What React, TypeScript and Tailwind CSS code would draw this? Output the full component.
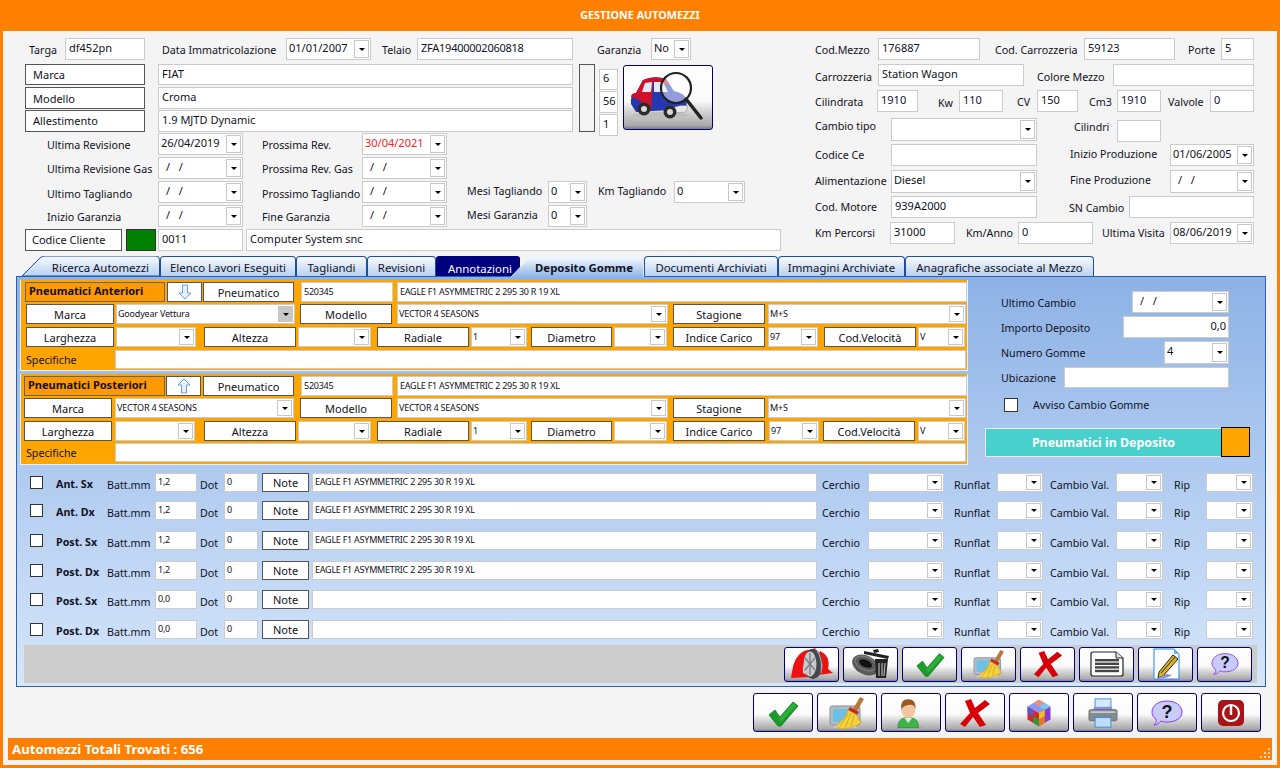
import type { ReactNode } from 'react'

type P = { className?: string; value?: string; tiny?: boolean; red?: boolean }

function Label({ className = '', children, bold }: { className?: string; children: ReactNode; bold?: boolean }) {
  return (
    <span className={'shrink-0 whitespace-nowrap text-[10.7px] text-[#111122] ' + (bold ? 'font-bold ' : '') + className}>
      {children}
    </span>
  )
}

function Input({ className = '', value = '', tiny, red, low }: P & { low?: boolean }) {
  return (
    <input
      readOnly
      value={value}
      className={
        'shrink-0 h-full min-w-0 bg-white border border-[#CBCBCB] outline-none ' +
        (low ? 'pb-[1px] ' : 'pb-[3px] ') +
        (tiny ? 'pl-[2px] text-[9px] tracking-[-0.25px] ' : 'pl-[3px] text-[11px] ') +
        (red ? 'text-[#ff2020] ' : 'text-[#111122] ') +
        className
      }
    />
  )
}

function Combo({ className = '', value = '', tiny, red, disabled }: P & { disabled?: boolean }) {
  const blank = value === ' / /'
  return (
    <div className={'shrink-0 h-full flex bg-white border border-[#CBCBCB] ' + className}>
      <span
        className={
          'flex-1 overflow-hidden whitespace-pre leading-[18px] ' +
          (blank ? 'pl-[7px] ' : tiny ? 'pl-[1px] ' : 'pl-[2px] ') +
          (tiny ? 'text-[9px] tracking-[-0.2px] ' : 'text-[11px] ') +
          (red ? 'text-[#ff2020]' : 'text-[#111122]')
        }
      >
        {blank ? '/   /' : value}
      </span>
      <span
        className={
          'w-[15px] my-[1px] mr-[1px] border flex items-center justify-center ' +
          (disabled ? 'bg-[#C8C8C8] border-[#C8C8C8]' : 'bg-white border-[#C8C8C8]')
        }
      >
        <span className="w-0 h-0 border-x-[3px] border-x-transparent border-t-[3px] border-t-black" />
      </span>
    </div>
  )
}

function Btn({ className = '', children }: { className?: string; children: ReactNode }) {
  return (
    <button className={'shrink-0 h-full flex items-center justify-center bg-white border border-[#555555] text-[11px] text-[#111122] ' + (className.includes('pt-') ? '' : 'pt-[2px] ') + className}>
      {children}
    </button>
  )
}

function ImgBtn({ className = '', children }: { className?: string; children: ReactNode }) {
  return (
    <button
      className={
        'shrink-0 flex items-center justify-center rounded-[3px] border border-[#00007F] bg-[linear-gradient(to_bottom,#ffffff_0%,#fafafa_55%,#d4d4d4_72%,#aaaaaa_94%,#808080_100%)] ' +
        className
      }
    >
      {children}
    </button>
  )
}

function CheckIcon({ s = 32 }: { s?: number }) {
  return (
    <svg width={s} height={s} viewBox="0 0 32 32">
      <path d="M2 18 L8 13 L13 20 L26 5 L31 9 L14 29 L11 29 Z" fill="#1c9a2a" stroke="#0d7a1b" strokeWidth="0.8" />
      <path d="M8 14 L13 21 L26 6 L29 9 L14 25 Z" fill="#2cae38" />
    </svg>
  )
}

function XIcon({ s = 32 }: { s?: number }) {
  return (
    <svg width={s} height={s} viewBox="0 0 32 32">
      <path d="M6 4 L12 2 L16 11 L26 3 L31 7 L19 16 L27 28 L21 30 L14 20 L6 30 L1 27 L11 16 Z" fill="#d80008" />
    </svg>
  )
}

function BroomIcon({ s = 34 }: { s?: number }) {
  return (
    <svg width={s + 6} height={s} viewBox="0 0 40 34">
      <rect x="3" y="10" width="30" height="19" rx="2" fill="#b6bcc2" stroke="#8b9096" />
      <rect x="6" y="13" width="24" height="13" fill="#6cc0ea" />
      <path d="M8 29 L28 29 L30 32 L6 32 Z" fill="#c4c8cc" />
      <path d="M33 1 L37 3 L30 15 L26 13 Z" fill="#b47a3a" />
      <path d="M23 11 L32 16 L30 19 L21 14 Z" fill="#d0242a" />
      <path d="M21 14 L30 19 Q31 25 35 26 Q27 32 15 33 Q10 32 9 29 Q18 24 21 14 Z" fill="#f3d23c" stroke="#c9a020" strokeWidth="0.6" />
      <path d="M24 17 L18 32 M21 18 L13 30 M27 19 L24 30" stroke="#c9a020" strokeWidth="0.8" />
    </svg>
  )
}

function HelpIcon({ s = 30 }: { s?: number }) {
  return (
    <svg width={s + 2} height={s} viewBox="0 0 32 30">
      <path d="M16 3 C25 3 31 8 31 14 C31 20 25 24 16 24 C14 24 12 24 10 23 C8 25 6 27 3 27 C5 25 6 23 5 21 C2 19 1 17 1 14 C1 8 7 3 16 3 Z" fill="#c9ccfa" stroke="#8a3cf0" strokeWidth="1" />
      <text x="16" y="20" textAnchor="middle" fontSize="18" fontWeight="700" fill="#111111" fontFamily="Liberation Sans">?</text>
    </svg>
  )
}

function TireSwapIcon() {
  return (
    <svg width="44" height="32" viewBox="0 0 44 32">
      <path d="M2 24 Q4 8 14 3 L26 0 L20 9 Q12 13 13 25 L20 29 L1 30 Z" fill="#ee1111" />
      <path d="M30 3 Q41 8 38 21 L43 25 L28 27 L32 21 Q34 12 28 8 Z" fill="#ee1111" />
      <ellipse cx="23" cy="16" rx="9.5" ry="15" fill="#45484c" />
      <ellipse cx="20" cy="16" rx="6.5" ry="12.5" fill="#c7c9cc" />
      <path d="M20 5 L20 27 M15 10 L25 22 M25 10 L15 22" stroke="#7d8084" strokeWidth="1.4" />
      <path d="M27 3 Q33 10 31 25" stroke="#bbbbbb" strokeWidth="1" fill="none" />
    </svg>
  )
}

function TireTrashIcon() {
  return (
    <svg width="40" height="32" viewBox="0 0 40 32">
      <ellipse cx="14.500" cy="17" rx="14" ry="9.500" transform="rotate(25 14.500 17)" fill="#5a5a5a" />
      <ellipse cx="14.500" cy="15.500" rx="11" ry="6.500" transform="rotate(25 14.500 15.500)" fill="none" stroke="#8c8c8c" strokeWidth="0.8" />
      <ellipse cx="14.500" cy="15.500" rx="7" ry="3.500" transform="rotate(25 14.500 15.500)" fill="#111111" />
      <path d="M22 2 L27 1 L28 4 L23 5 Z" fill="#222222" />
      <path d="M13 3 L38 8 L37 11 L13 6 Z" fill="#222222" />
      <path d="M24 11 L37 11 L35 30 L25 30 Z" fill="#222222" />
      <path d="M28 15 L28 28 M31 15 L31 28 M34 15 L33 28" stroke="#aaaaaa" strokeWidth="1.3" />
    </svg>
  )
}

function DocIcon() {
  return (
    <svg width="34" height="26" viewBox="0 0 34 26">
      <path d="M3 1 L26 1 L33 7 L33 23 Q33 25 31 25 L3 25 Q1 25 1 23 L1 3 Q1 1 3 1 Z" fill="#ffffff" stroke="#222" strokeWidth="1.2" />
      <path d="M26 1 L26 7 L33 7" fill="#e4e4e4" stroke="#222" strokeWidth="1" />
      <rect x="5" y="8" width="24" height="2.4" fill="#444" />
      <rect x="5" y="11.600" width="24" height="2.4" fill="#444" />
      <rect x="5" y="15.200" width="24" height="2.4" fill="#444" />
      <rect x="5" y="18.800" width="24" height="2.4" fill="#444" />
    </svg>
  )
}

function NoteIcon() {
  return (
    <svg width="28" height="32" viewBox="0 0 28 32">
      <path d="M2 1 L22 1 L27 6 L27 31 L2 31 Z" fill="#ffffff" stroke="#1e88e5" strokeWidth="1" />
      <path d="M22 1 L22 6 L27 6" fill="#6fb4ee" />
      <path d="M21 7 L26 11 L11 28 L6 30 L7 24 Z" fill="#e0b428" stroke="#222" strokeWidth="1" />
      <path d="M23 9 L9 25" stroke="#222" strokeWidth="1" />
      <path d="M6 30 L14 26 L20 27 Q14 31 6 30 Z" fill="#8f8fd8" />
    </svg>
  )
}

function PersonIcon() {
  return (
    <svg width="38" height="36" viewBox="0 0 34 33">
      <ellipse cx="18" cy="30" rx="12" ry="2" fill="#aaaaaa" />
      <path d="M5 30 Q5 22 11 21 L18 21 Q24 22 24 30 Z" fill="#3fb24a" stroke="#23892c" strokeWidth="0.6" />
      <path d="M11 21 L14.500 26 L18 21 Z" fill="#d8f0d8" />
      <ellipse cx="14.500" cy="13" rx="6.500" ry="8" fill="#f2c6a0" />
      <path d="M8 13 Q7 4 14.500 4 Q22 4 21 13 Q20 9 17 9 Q11 9 8 13 Z" fill="#9a5a22" />
    </svg>
  )
}

function CubeIcon() {
  return (
    <svg width="28" height="30" viewBox="0 0 34 34">
      <path d="M17 1 L31 9 L17 17 L3 9 Z" fill="#8f96f2" />
      <path d="M17 1 L24 5 L17 9 L10 5 Z" fill="#e8907c" />
      <path d="M24 5 L31 9 L24 13 L17 9 Z" fill="#7fc3f0" />
      <path d="M3 9 L17 17 L17 33 L3 25 Z" fill="#d02a2a" />
      <path d="M3 9 L10 13 L10 21 L3 17 Z" fill="#5a5ad8" />
      <path d="M10 21 L17 25 L17 33 L10 29 Z" fill="#2c9a3c" />
      <path d="M31 9 L17 17 L17 33 L31 25 Z" fill="#8a3cd0" />
      <path d="M17 17 L24 13 L24 21 L17 25 Z" fill="#f0c020" />
      <path d="M17 25 L24 21 L24 29 L17 33 Z" fill="#e87820" />
    </svg>
  )
}

function PrinterIcon() {
  return (
    <svg width="30" height="30" viewBox="0 0 34 34">
      <rect x="8" y="1" width="18" height="14" fill="#d4ebff" stroke="#2a8ae0" />
      <path d="M7 10 L27 10 L28 15 L6 15 Z" fill="#8e8ee6" />
      <rect x="1" y="13" width="32" height="13" rx="2" fill="#848a90" stroke="#5c6268" strokeWidth="0.7" />
      <rect x="3" y="15" width="28" height="2" fill="#c8ccd0" />
      <circle cx="29" cy="18" r="1" fill="#34b050" />
      <rect x="8" y="22" width="18" height="11" fill="#bcdcfa" stroke="#2a8ae0" />
    </svg>
  )
}

function PowerIcon() {
  return (
    <svg width="28" height="28" viewBox="0 0 28 28">
      <rect x="1" y="1" width="26" height="26" rx="5" fill="#a81418" />
      <circle cx="14" cy="14" r="8" fill="none" stroke="#ffffff" strokeWidth="2.2" />
      <rect x="12.800" y="7" width="2.4" height="9" fill="#ffffff" />
    </svg>
  )
}

function CarIcon() {
  return (
    <svg width="88" height="63" viewBox="0 0 88 63">
      <ellipse cx="36" cy="49" rx="28" ry="3" fill="#bdbdbd" />
      <path d="M7 38 Q6 29 12 27 L19 14 Q30 9 42 13 L50 25 Q61 27 63 35 L62 43 L12 46 Z" fill="#2538b0" />
      <path d="M7 31 Q7 27 12 27 L19 14 Q30 9 42 13 L46 19 L29 15 L27 44 L22 44 Q18 32 7 31 Z" fill="#d01028" />
      <path d="M21 17 L28 16 L27 26 L18 26 Z" fill="#dfe8f4" />
      <path d="M30 16 L39 16 L44 26 L30 26 Z" fill="#dfe8f4" />
      <path d="M46 43 Q56 38 64 40 L62 46 L48 47 Z" fill="#e8e8e8" stroke="#888" strokeWidth="0.5" />
      <circle cx="20" cy="43" r="6.500" fill="#2a2a2a" />
      <circle cx="20" cy="43" r="3" fill="#d8d8d8" />
      <circle cx="46" cy="46" r="6.500" fill="#2a2a2a" />
      <circle cx="46" cy="46" r="3" fill="#d8d8d8" />
      <circle cx="52" cy="22" r="15" fill="#ffffff" fillOpacity="0.5" stroke="#222222" strokeWidth="2.2" />
      <path d="M62 33 L77 52" stroke="#222222" strokeWidth="3.4" strokeLinecap="round" />
    </svg>
  )
}

function ArrowIcon({ up }: { up?: boolean }) {
  return (
    <svg width="14" height="16" viewBox="0 0 14 16" className={up ? '' : 'rotate-180'}>
      <path d="M7 1 L13 7 L9.5 7 L9.5 15 L4.5 15 L4.5 7 L1 7 Z" fill="#e6f0fb" stroke="#6f9fd8" strokeWidth="1" />
    </svg>
  )
}

function TireGroup({ rear }: { rear?: boolean }) {
  return (
    <div className={'flex flex-col bg-[#FFA500] border-x border-b border-[#EAF1FB] h-[91px] ' + (rear ? 'mt-[3px] pt-[2px]' : 'pt-[2px]')}>
      <div className="flex h-[20px]">
        <div className={'shrink-0 h-full bg-[#FF9900] border border-[#666666] pl-[3px] text-[11px] font-bold text-[#111122] leading-[16px] ' + (rear ? 'ml-[3px] w-[141px]' : 'ml-[4px] w-[140px]')}>
          {rear ? 'Pneumatici Posteriori' : 'Pneumatici Anteriori'}
        </div>
        <Btn className={rear ? 'ml-[1px] w-[35px] !pt-0' : 'ml-[2px] w-[35px] !pt-0'}><ArrowIcon up={rear} /></Btn>
        <Btn className={rear ? 'ml-[2px] w-[91px]' : 'ml-[1px] w-[91px]'}>Pneumatico</Btn>
        <Input tiny low className="ml-[7px] w-[92px]" value="520345" />
        <Input tiny low className="ml-[4px] w-[570px]" value="EAGLE F1 ASYMMETRIC 2 295 30 R 19 XL" />
      </div>
      <div className="flex h-[20px] mt-[2px]">
        <Btn className={rear ? 'ml-[3px] w-[88px]' : 'ml-[5px] w-[88px]'}>Marca</Btn>
        <Combo tiny disabled={!rear} className={rear ? 'ml-[3px] w-[179px]' : 'ml-[2px] w-[179px]'} value={rear ? 'VECTOR 4 SEASONS' : 'Goodyear Vettura'} />
        <Btn className={rear ? 'ml-[6px] w-[92px]' : 'ml-[5px] w-[92px]'}>Modello</Btn>
        <Combo tiny className="ml-[5px] w-[271px]" value="VECTOR 4 SEASONS" />
        <Btn className="ml-[5px] w-[92px]">Stagione</Btn>
        <Combo tiny className="ml-[3px] w-[198px]" value="M+S" />
      </div>
      <div className="flex h-[20px] mt-[3px]">
        <Btn className={rear ? 'ml-[3px] w-[88px]' : 'ml-[5px] w-[88px]'}>Larghezza</Btn>
        <Combo className={rear ? 'ml-[3px] w-[80px]' : 'ml-[2px] w-[80px]'} />
        <Btn className={rear ? 'ml-[9px] w-[92px]' : 'ml-[8px] w-[92px]'}>Altezza</Btn>
        <Combo className="ml-[2px] w-[73px]" />
        <Btn className="ml-[6px] w-[92px]">Radiale</Btn>
        <Combo tiny className="ml-[2px] w-[56px]" value="1" />
        <Btn className="ml-[4px] w-[81px]">Diametro</Btn>
        <Combo className="ml-[2px] w-[53px]" />
        <Btn className="ml-[6px] w-[92px]">Indice Carico</Btn>
        <Combo tiny className={rear ? 'ml-[4px] w-[50px]' : 'ml-[3px] w-[50px]'} value="97" />
        <Btn className={rear ? 'ml-[4px] w-[92px]' : 'ml-[6px] w-[92px]'}>Cod.Velocità</Btn>
        <Combo tiny className={rear ? 'ml-[3px] w-[47px]' : 'ml-[2px] w-[47px]'} value="V" />
      </div>
      <div className={'flex h-[19px] items-center ' + (rear ? 'mt-[2px]' : 'mt-[3px]')}>
        <Label className="ml-[5px] w-[89px] pt-[2px]">Specifiche</Label>
        <Input className="w-[851px]" />
      </div>
    </div>
  )
}

function TireRow({ className = '', name, batt, note }: { className?: string; name: string; batt: string; note?: boolean }) {
  return (
    <div className={'flex h-[19px] pl-[13px] ' + className}>
      <span className="shrink-0 w-[13px] h-[13px] mt-[3px] bg-white border border-[#333333]" />
      <Label bold className="ml-[13px] w-[51px] pt-[3px]">{name}</Label>
      <Label className="w-[48px] pt-[4px]">Batt.mm</Label>
      <Input tiny className="w-[42px]" value={batt} />
      <Label className="ml-[3px] w-[24px] pt-[4px]">Dot</Label>
      <Input tiny className="w-[34px]" value="0" />
      <Btn className="ml-[4px] w-[47px]">Note</Btn>
      <Input tiny className="ml-[3px] w-[505px]" value={note ? 'EAGLE F1 ASYMMETRIC 2 295 30 R 19 XL' : ''} />
      <Label className="ml-[5px] w-[46px] pt-[4px]">Cerchio</Label>
      <Combo className="w-[76px]" />
      <Label className="ml-[10px] w-[43px] pt-[4px]">Runflat</Label>
      <Combo className="w-[46px]" />
      <Label className="ml-[7px] w-[66px] pt-[4px]">Cambio Val.</Label>
      <Combo className="w-[47px]" />
      <Label className="ml-[11px] w-[32px] pt-[4px]">Rip</Label>
      <Combo className="w-[47px]" />
    </div>
  )
}

function Tab({ className = '', children }: { className?: string; children: ReactNode }) {
  return (
    <div className={'shrink-0 h-full flex items-center justify-center pt-[3px] rounded-t-[4px] border border-b-0 border-[#1E4F9E] bg-[linear-gradient(to_bottom,#F7FAFE,#B9D1F1)] text-[11.4px] text-[#111122] ' + className}>
      {children}
    </div>
  )
}

function Tabs() {
  return (
    <div className="flex h-[20px] mt-[5px] ml-[19px]">
      <div className="relative shrink-0 w-[138px] h-full flex items-center justify-end pr-[11px] pt-[3px] text-[11.4px] text-[#111122]">
        <svg className="absolute inset-0" width="138" height="20" viewBox="0 0 138 20">
          <defs>
            <linearGradient id="tabA" x1="0" y1="0" x2="0" y2="1">
              <stop offset="0" stopColor="#F7FAFE" />
              <stop offset="1" stopColor="#B9D1F1" />
            </linearGradient>
          </defs>
          <path d="M0 20 L18 2 Q20 0 23 0 L134 0 Q137.500 0 137.500 4 L137.500 20 Z" fill="url(#tabA)" stroke="#1E4F9E" />
        </svg>
        <span className="relative">Ricerca Automezzi</span>
      </div>
      <Tab className="w-[136px]">Elenco Lavori Eseguiti</Tab>
      <Tab className="w-[71px]">Tagliandi</Tab>
      <Tab className="w-[69px]">Revisioni</Tab>
      <div className="shrink-0 w-[84px] h-full bg-[#00007F] rounded-t-[3px] text-[11.4px] text-white pl-[12px] leading-[25px] overflow-hidden whitespace-nowrap">
        Annotazioni
      </div>
      <div className="relative z-10 shrink-0 -ml-[9px] w-[133px] h-full flex items-center justify-end pr-[11px] pt-[3px] text-[11.4px] font-bold text-[#111122]">
        <svg className="absolute inset-0" width="133" height="21" viewBox="0 0 133 21">
          <defs>
            <linearGradient id="tabB" x1="0" y1="0" x2="0" y2="1">
              <stop offset="0" stopColor="#FBFDFF" />
              <stop offset="1" stopColor="#8FB4E8" />
            </linearGradient>
          </defs>
          <path d="M0 21 L18 2 Q20 0 23 0 L129 0 Q132.500 0 132.500 4 L132.500 21" fill="url(#tabB)" stroke="#E4EEFA" />
        </svg>
        <span className="relative">Deposito Gomme</span>
      </div>
      <Tab className="w-[134px]">Documenti Archiviati</Tab>
      <Tab className="w-[127px]">Immagini Archiviate</Tab>
      <Tab className="w-[189px]">Anagrafiche associate al Mezzo</Tab>
    </div>
  )
}

export default function App() {
  return (
    <div className="w-[1280px] h-[768px] overflow-hidden flex flex-col bg-[#FF8000] font-['Noto_Sans',sans-serif]">
      <div className="h-[31px] shrink-0 flex items-center justify-center text-[10.8px] font-bold text-white">
        GESTIONE AUTOMEZZI
      </div>

      <div className="mx-[3px] h-[734px] flex flex-col bg-[#F4F4F4]">
        <div className="flex pt-[7px] pl-[22px]">
          <div className="w-[756px] shrink-0 flex flex-col">
            <div className="flex h-[22px] items-center">
              <Label className="ml-[4px] w-[36px] pt-[2px]">Targa</Label>
              <Input className="w-[80px]" value="df452pn" />
              <Label className="ml-[17px] w-[124px] pt-[2px]">Data Immatricolazione</Label>
              <Combo className="w-[85px]" value="01/01/2007" />
              <Label className="ml-[11px] w-[35px] pt-[2px]">Telaio</Label>
              <Input className="w-[156px] tracking-[-0.25px]" value="ZFA19400002060818" />
              <Label className="ml-[24px] w-[54px] pt-[2px]">Garanzia</Label>
              <Combo className="w-[40px]" value="No" />
            </div>

            <div className="flex mt-[4px] h-[68px]">
              <div className="flex flex-col w-[548px] shrink-0">
                <div className="flex h-[21px]">
                  <Btn className="w-[120px] !justify-start pl-[7px]">Marca</Btn>
                  <Input className="ml-[13px] w-[415px]" value="FIAT" />
                </div>
                <div className="flex h-[22px] mt-[2px]">
                  <Btn className="w-[120px] !justify-start pl-[7px]">Modello</Btn>
                  <Input className="ml-[13px] w-[415px]" value="Croma" />
                </div>
                <div className="flex h-[22px] mt-[1px]">
                  <Btn className="w-[120px] !justify-start pl-[7px] !pt-0">Allestimento</Btn>
                  <Input className="ml-[13px] w-[415px]" value="1.9 MJTD Dynamic" />
                </div>
              </div>
              <div className="ml-[6px] w-[16px] h-full shrink-0 border border-[#555555]" />
              <div className="ml-[4px] w-[19px] flex flex-col shrink-0">
                <div className="h-[21px]"><Input className="w-full" value="6" /></div>
                <div className="h-[22px] mt-[2px]"><Input className="w-full" value="56" /></div>
                <div className="h-[22px] mt-[1px]"><Input className="w-full" value="1" /></div>
              </div>
              <ImgBtn className="ml-[5px] mt-[1px] w-[90px] h-[65px]"><CarIcon /></ImgBtn>
            </div>

            <div className="flex h-[22px] mt-[1px] items-center">
              <Label className="ml-[22px] w-[111px] pt-[2px]">Ultima Revisione</Label>
              <Combo className="w-[85px]" value="26/04/2019" />
              <Label className="ml-[19px] w-[100px] pt-[2px]">Prossima Rev.</Label>
              <Combo red className="w-[85px]" value="30/04/2021" />
            </div>
            <div className="flex h-[22px] mt-[2px] items-center">
              <Label className="ml-[22px] w-[111px] pt-[2px]">Ultima Revisione Gas</Label>
              <Combo className="w-[85px]" value=" / /" />
              <Label className="ml-[19px] w-[100px] pt-[2px]">Prossima Rev. Gas</Label>
              <Combo className="w-[85px]" value=" / /" />
            </div>
            <div className="flex h-[22px] mt-[2px] items-center">
              <Label className="ml-[22px] w-[111px] pt-[4px]">Ultimo Tagliando</Label>
              <Combo className="w-[85px]" value=" / /" />
              <Label className="ml-[19px] w-[100px] pt-[4px]">Prossimo Tagliando</Label>
              <Combo className="w-[85px]" value=" / /" />
              <Label className="ml-[20px] w-[81px] pb-[2px]">Mesi Tagliando</Label>
              <Combo className="w-[39px]" value="0" />
              <Label className="ml-[11px] w-[76px] pb-[2px]">Km Tagliando</Label>
              <Combo className="w-[71px]" value="0" />
            </div>
            <div className="flex h-[22px] mt-[2px] items-center">
              <Label className="ml-[22px] w-[111px] pt-[2px]">Inizio Garanzia</Label>
              <Combo className="w-[85px]" value=" / /" />
              <Label className="ml-[19px] w-[100px] pt-[2px]">Fine Garanzia</Label>
              <Combo className="w-[85px]" value=" / /" />
              <Label className="ml-[20px] w-[81px] pb-[2px]">Mesi Garanzia</Label>
              <Combo className="w-[39px]" value="0" />
            </div>
            <div className="flex h-[22px] mt-[2px]">
              <Btn className="w-[97px] !justify-start pl-[6px] !pt-0">Codice Cliente</Btn>
              <div className="ml-[4px] w-[30px] h-full shrink-0 bg-[#008000] border border-[#333333]" />
              <Input className="ml-[2px] w-[85px]" value="0011" />
              <Input className="ml-[3px] w-[535px]" value="Computer System snc" />
            </div>
          </div>

          <div className="ml-[34px] flex flex-col">
            <div className="flex h-[22px] items-center">
              <Label className="w-[63px] pt-[2px]">Cod.Mezzo</Label>
              <Input className="w-[102px]" value="176887" />
              <Label className="ml-[15px] w-[89px] pt-[2px]">Cod. Carrozzeria</Label>
              <Input className="w-[91px]" value="59123" />
              <Label className="ml-[13px] w-[33px] pt-[2px]">Porte</Label>
              <Input className="w-[33px]" value="5" />
            </div>
            <div className="flex h-[22px] mt-[4px] items-center">
              <Label className="w-[63px] pt-[4px]">Carrozzeria</Label>
              <Input className="w-[146px]" value="Station Wagon" />
              <Label className="ml-[13px] w-[76px] pt-[4px]">Colore Mezzo</Label>
              <Input className="w-[141px]" />
            </div>
            <div className="flex h-[22px] mt-[4px] items-center">
              <Label className="w-[62px] pt-[2px]">Cilindrata</Label>
              <Input className="w-[41px]" value="1910" />
              <Label className="ml-[20px] w-[21px] pt-[4px]">Kw</Label>
              <Input className="w-[44px]" value="110" />
              <Label className="ml-[14px] w-[20px] pt-[2px]">CV</Label>
              <Input className="w-[41px]" value="150" />
              <Label className="ml-[11px] w-[28px] pt-[2px]">Cm3</Label>
              <Input className="w-[44px]" value="1910" />
              <Label className="ml-[7px] w-[42px] pt-[2px]">Valvole</Label>
              <Input className="w-[44px]" value="0" />
            </div>
            <div className="flex h-[25px] mt-[4px]">
              <Label className="w-[76px] pt-[2px]">Cambio tipo</Label>
              <div className="h-[23px] mt-[2px] shrink-0"><Combo className="w-[146px]" /></div>
              <Label className="ml-[37px] w-[43px] pt-[3px]">Cilindri</Label>
              <div className="h-[22px] shrink-0"><Input className="w-[44px]" /></div>
            </div>
            <div className="flex h-[22px] mt-[3px] items-center">
              <Label className="w-[76px]">Codice Ce</Label>
              <Input className="w-[146px]" />
              <Label className="ml-[33px] w-[100px] pb-[2px]">Inizio Produzione</Label>
              <Combo className="w-[84px]" value="01/06/2005" />
            </div>
            <div className="flex h-[23px] mt-[4px] items-center">
              <Label className="w-[76px]">Alimentazione</Label>
              <Combo className="w-[146px]" value="Diesel" />
              <Label className="ml-[33px] w-[100px] pb-[2px]">Fine Produzione</Label>
              <Combo className="w-[84px]" value=" / /" />
            </div>
            <div className="flex h-[22px] mt-[3px] items-center">
              <Label className="w-[76px]">Cod. Motore</Label>
              <Input className="w-[146px]" value="939A2000" />
              <Label className="ml-[32px] w-[60px] pt-[2px]">SN Cambio</Label>
              <Input className="w-[125px]" />
            </div>
            <div className="flex h-[22px] mt-[4px] items-center">
              <Label className="w-[75px]">Km Percorsi</Label>
              <Input className="w-[65px]" value="31000" />
              <Label className="ml-[11px] w-[52px]">Km/Anno</Label>
              <Input className="w-[75px]" value="0" />
              <Label className="ml-[9px] w-[68px]">Ultima Visita</Label>
              <Combo className="w-[84px]" value="08/06/2019" />
            </div>
          </div>
        </div>

        <Tabs />

        <div className="ml-[13px] w-[1250px] h-[411px] shrink-0 flex flex-col border border-[#2F5FA8] bg-[linear-gradient(to_bottom,#8DB2E6,#D6E6FB)]">
          <div className="flex pt-[3px]">
            <div className="ml-[3px] w-[948px] shrink-0 flex flex-col">
              <TireGroup />
              <TireGroup rear />
            </div>
            <div className="flex flex-col pt-[11px]">
              <div className="flex h-[22px] items-center pl-[33px]">
                <Label className="w-[131px] pt-[2px]">Ultimo Cambio</Label>
                <Combo className="w-[97px]" value=" / /" />
              </div>
              <div className="flex h-[22px] mt-[3px] items-center pl-[33px]">
                <Label className="w-[122px] pt-[2px]">Importo Deposito</Label>
                <Input className="w-[106px] text-right pr-[2px]" value="0,0" />
              </div>
              <div className="flex h-[23px] mt-[3px] items-center pl-[33px]">
                <Label className="w-[163px] pt-[2px]">Numero Gomme</Label>
                <Combo className="w-[65px]" value="4" />
              </div>
              <div className="flex h-[21px] mt-[3px] items-center pl-[33px]">
                <Label className="w-[63px] pt-[2px]">Ubicazione</Label>
                <Input className="w-[165px]" />
              </div>
              <div className="flex h-[14px] mt-[10px] items-center pl-[36px]">
                <span className="shrink-0 w-[14px] h-[14px] bg-white border border-[#333333]" />
                <Label className="ml-[15px]">Avviso Cambio Gomme</Label>
              </div>
              <div className="flex h-[30px] mt-[15px] pl-[17px]">
                <div className="w-[237px] h-[29px] mt-[1px] pt-[2px] shrink-0 flex items-center justify-center bg-[#48D1CC] border border-[#EAF1FB] text-[12.4px] font-bold text-white">
                  Pneumatici in Deposito
                </div>
                <div className="-ml-[1px] w-[29px] h-full shrink-0 bg-[#FFA500] border border-black" />
              </div>
            </div>
          </div>

          <TireRow className="mt-[8px]" name="Ant. Sx" batt="1,2" note />
          <TireRow className="mt-[9px]" name="Ant. Dx" batt="1,2" note />
          <TireRow className="mt-[11px]" name="Post. Sx" batt="1,2" note />
          <TireRow className="mt-[11px]" name="Post. Dx" batt="1,2" note />
          <TireRow className="mt-[10px]" name="Post. Sx" batt="0,0" />
          <TireRow className="mt-[11px]" name="Post. Dx" batt="0,0" />

          <div className="ml-[7px] mt-[6px] w-[1233px] h-[38px] shrink-0 flex items-center justify-end gap-[4px] pr-[5px] bg-[#CCCCCC]">
            <ImgBtn className="w-[55px] h-[35px]"><TireSwapIcon /></ImgBtn>
            <ImgBtn className="w-[55px] h-[35px]"><TireTrashIcon /></ImgBtn>
            <ImgBtn className="w-[55px] h-[35px]"><CheckIcon s={30} /></ImgBtn>
            <ImgBtn className="w-[55px] h-[35px]"><BroomIcon s={30} /></ImgBtn>
            <ImgBtn className="w-[55px] h-[35px]"><XIcon s={30} /></ImgBtn>
            <ImgBtn className="w-[55px] h-[35px]"><DocIcon /></ImgBtn>
            <ImgBtn className="w-[55px] h-[35px]"><NoteIcon /></ImgBtn>
            <ImgBtn className="w-[55px] h-[35px]"><HelpIcon s={26} /></ImgBtn>
          </div>
        </div>

        <div className="flex justify-end gap-[4px] mt-[6px] pr-[16px] h-[39px] shrink-0">
          <ImgBtn className="w-[60px] h-full"><CheckIcon /></ImgBtn>
          <ImgBtn className="w-[60px] h-full"><BroomIcon /></ImgBtn>
          <ImgBtn className="w-[60px] h-full"><PersonIcon /></ImgBtn>
          <ImgBtn className="w-[60px] h-full"><XIcon /></ImgBtn>
          <ImgBtn className="w-[60px] h-full"><CubeIcon /></ImgBtn>
          <ImgBtn className="w-[60px] h-full"><PrinterIcon /></ImgBtn>
          <ImgBtn className="w-[60px] h-full"><HelpIcon /></ImgBtn>
          <ImgBtn className="w-[60px] h-full"><PowerIcon /></ImgBtn>
        </div>

        <div className="ml-[5px] mt-[6px] w-[1264px] h-[22px] shrink-0 flex items-center bg-[#FF8000] pl-[4px] pr-[1px] pt-[2px] text-[13.2px] font-bold text-white">
          Automezzi Totali Trovati : 656
          <svg className="ml-auto self-end mb-[1px]" width="11" height="11" viewBox="0 0 11 11" fill="#f6d8b8">
            <rect x="8" y="0" width="2" height="2" />
            <rect x="4" y="4" width="2" height="2" />
            <rect x="8" y="4" width="2" height="2" />
            <rect x="0" y="8" width="2" height="2" />
            <rect x="4" y="8" width="2" height="2" />
            <rect x="8" y="8" width="2" height="2" />
          </svg>
        </div>
      </div>
    </div>
  )
}
